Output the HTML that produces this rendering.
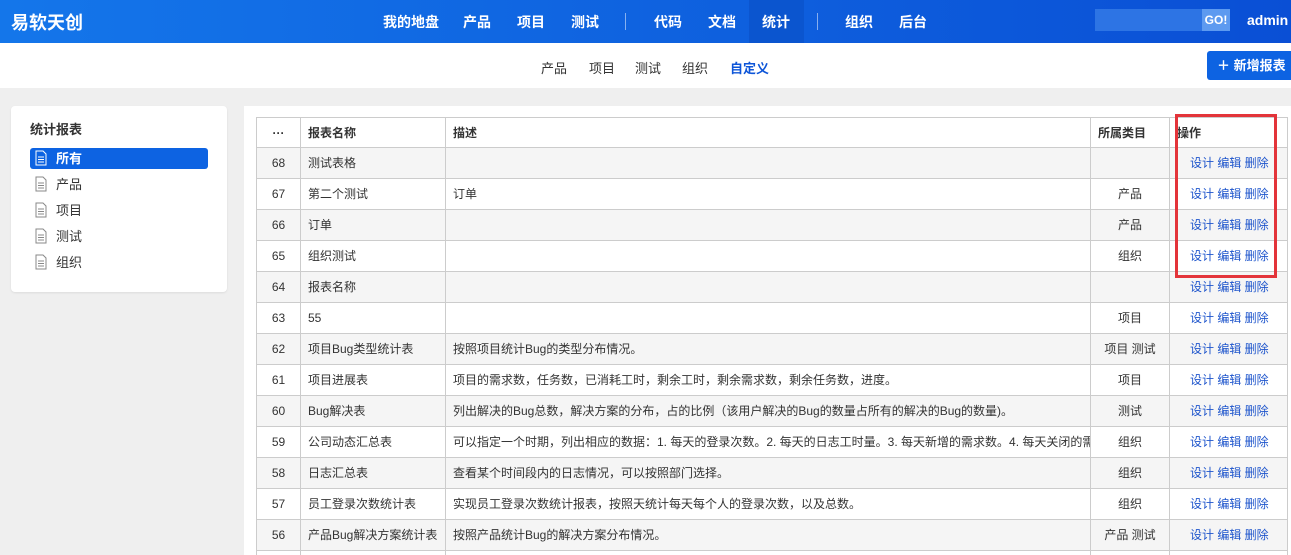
<!DOCTYPE html>
<html><head><meta charset="utf-8"><style>
*{margin:0;padding:0;box-sizing:border-box}
html{overflow:hidden;width:1291px;height:555px}
body{width:1291px;height:555px;overflow:hidden;background:#efefef;font-family:"Liberation Sans","Noto Sans CJK SC",sans-serif;font-size:13px;color:#333;position:relative}
.hd{position:absolute;left:0;top:0;width:1291px;height:43px;background:linear-gradient(90deg,#1476ea,#0a4fd5)}
.logo{position:absolute;left:11px;top:9px;color:#fff;font-size:18px;font-weight:bold}
.nav a{position:absolute;top:12px;color:#fff;font-size:14px;font-weight:bold}
.sep{position:absolute;top:13px;width:1px;height:17px;background:rgba(255,255,255,.5)}
.act{position:absolute;left:749px;top:0;width:55px;height:43px;background:#0b55cf}
.srch{position:absolute;left:1095px;top:9px;width:108px;height:22px;background:#2d74e4}
.go{position:absolute;left:1202px;top:9px;width:28px;height:22px;background:#5d9af0;color:#fff;font-size:12px;text-align:center;line-height:22px;font-weight:bold}
.sub{position:absolute;left:0;top:43px;width:1291px;height:45px;background:#fff}
.sub a{position:absolute;top:15px;font-size:13px;color:#333}
.btn{position:absolute;left:1207px;top:51px;width:90px;height:29px;background:#0d63e2;border-radius:3px;color:#fff;font-weight:bold;font-size:13px;line-height:29px;padding-left:10px}
.side{position:absolute;left:11px;top:106px;width:216px;height:186px;background:#fff;border-radius:4px;box-shadow:0 1px 2px rgba(0,0,0,.08)}
.side h3{position:absolute;left:19px;top:13px;font-size:13px;font-weight:bold}
.it{position:absolute;left:19px;width:178px;height:21px;line-height:21px;padding-left:26px;font-size:13px}
.it svg{position:absolute;left:5px;top:2px}
.it.on{background:#0d63e2;color:#fff;border-radius:3px;font-weight:bold}
.main{position:absolute;left:244px;top:106px;width:1047px;height:449px;background:#fff}
table{position:absolute;left:256px;top:117px;width:1031px;border-collapse:collapse;table-layout:fixed}
td,th{border:1px solid #ccc;height:31px;padding:0 7px;white-space:nowrap;overflow:hidden;font-size:12px;line-height:16px;text-align:left;vertical-align:middle;font-weight:normal}
th{height:30px;font-weight:bold}
tr:nth-child(even) td{background:#f5f5f5}
td.n,th.n{text-align:center;padding:0}
.c{text-align:center}
.op{color:#1e55cc;padding-left:20px}
.red{position:absolute;left:1175px;top:114px;width:102px;height:164px;border:3px solid #e3343a}
</style></head><body>
<div class="hd">
<div class="logo">易软天创</div>
<div class="act"></div>
<div class="nav">
<a style="left:383px">我的地盘</a><a style="left:463px">产品</a><a style="left:517px">项目</a><a style="left:571px">测试</a>
<a style="left:654px">代码</a><a style="left:708px">文档</a><a style="left:762px">统计</a>
<a style="left:845px">组织</a><a style="left:899px">后台</a>
<a style="left:1247px">admin</a></div>
<div class="sep" style="left:625px"></div><div class="sep" style="left:817px"></div>
<div class="srch"></div><div class="go">GO!</div>
</div>
<div class="sub">
<a style="left:541px">产品</a><a style="left:589px">项目</a><a style="left:635px">测试</a><a style="left:682px">组织</a><a style="left:730px;color:#0d55d8;font-weight:bold">自定义</a>
</div>
<div class="btn">＋ 新增报表</div>
<div class="side"><h3>统计报表</h3>
<div class="it on" style="top:42px"><svg width="12" height="16" viewBox="0 0 12 16"><path d="M1 1h7l3 3v11H1z M3 7h6M3 9.5h6M3 12h6" fill="none" stroke="#fff"/></svg>所有</div>
<div class="it" style="top:68px"><svg width="12" height="16" viewBox="0 0 12 16"><path d="M1 1h7l3 3v11H1z M3 7h6M3 9.5h6M3 12h6" fill="none" stroke="#888"/></svg>产品</div>
<div class="it" style="top:94px"><svg width="12" height="16" viewBox="0 0 12 16"><path d="M1 1h7l3 3v11H1z M3 7h6M3 9.5h6M3 12h6" fill="none" stroke="#888"/></svg>项目</div>
<div class="it" style="top:120px"><svg width="12" height="16" viewBox="0 0 12 16"><path d="M1 1h7l3 3v11H1z M3 7h6M3 9.5h6M3 12h6" fill="none" stroke="#888"/></svg>测试</div>
<div class="it" style="top:146px"><svg width="12" height="16" viewBox="0 0 12 16"><path d="M1 1h7l3 3v11H1z M3 7h6M3 9.5h6M3 12h6" fill="none" stroke="#888"/></svg>组织</div>
</div>
<div class="main"></div>
<table>
<colgroup><col style="width:44px"><col style="width:145px"><col style="width:645px"><col style="width:79px"><col style="width:118px"></colgroup>
<tr><th class="n">···</th><th>报表名称</th><th>描述</th><th>所属类目</th><th>操作</th></tr>
<tr><td class="n">68</td><td>测试表格</td><td></td><td class="c"></td><td class="op">设计 编辑 删除</td></tr>
<tr><td class="n">67</td><td>第二个测试</td><td>订单</td><td class="c">产品</td><td class="op">设计 编辑 删除</td></tr>
<tr><td class="n">66</td><td>订单</td><td></td><td class="c">产品</td><td class="op">设计 编辑 删除</td></tr>
<tr><td class="n">65</td><td>组织测试</td><td></td><td class="c">组织</td><td class="op">设计 编辑 删除</td></tr>
<tr><td class="n">64</td><td>报表名称</td><td></td><td class="c"></td><td class="op">设计 编辑 删除</td></tr>
<tr><td class="n">63</td><td>55</td><td></td><td class="c">项目</td><td class="op">设计 编辑 删除</td></tr>
<tr><td class="n">62</td><td>项目Bug类型统计表</td><td>按照项目统计Bug的类型分布情况。</td><td class="c">项目 测试</td><td class="op">设计 编辑 删除</td></tr>
<tr><td class="n">61</td><td>项目进展表</td><td>项目的需求数，任务数，已消耗工时，剩余工时，剩余需求数，剩余任务数，进度。</td><td class="c">项目</td><td class="op">设计 编辑 删除</td></tr>
<tr><td class="n">60</td><td>Bug解决表</td><td>列出解决的Bug总数，解决方案的分布，占的比例（该用户解决的Bug的数量占所有的解决的Bug的数量)。</td><td class="c">测试</td><td class="op">设计 编辑 删除</td></tr>
<tr><td class="n">59</td><td>公司动态汇总表</td><td>可以指定一个时期，列出相应的数据：1. 每天的登录次数。2. 每天的日志工时量。3. 每天新增的需求数。4. 每天关闭的需求数。</td><td class="c">组织</td><td class="op">设计 编辑 删除</td></tr>
<tr><td class="n">58</td><td>日志汇总表</td><td>查看某个时间段内的日志情况，可以按照部门选择。</td><td class="c">组织</td><td class="op">设计 编辑 删除</td></tr>
<tr><td class="n">57</td><td>员工登录次数统计表</td><td>实现员工登录次数统计报表，按照天统计每天每个人的登录次数，以及总数。</td><td class="c">组织</td><td class="op">设计 编辑 删除</td></tr>
<tr><td class="n">56</td><td>产品Bug解决方案统计表</td><td>按照产品统计Bug的解决方案分布情况。</td><td class="c">产品 测试</td><td class="op">设计 编辑 删除</td></tr>
<tr><td class="n"></td><td></td><td></td><td></td><td></td></tr>
</table>
<div class="red"></div>
</body></html>
